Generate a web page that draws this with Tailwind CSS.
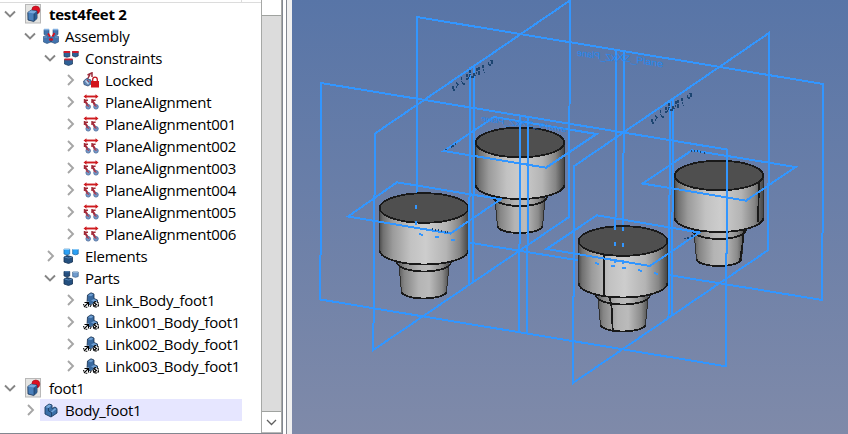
<!DOCTYPE html>
<html lang="en">
<head>
<meta charset="utf-8">
<title>Assembly</title>
<script src="https://cdn.jsdelivr.net/npm/@tailwindcss/browser@4"></script>
</head>
<body class="w-[848px] h-[434px] overflow-hidden bg-white">
<svg class="hidden">
  <symbol id="open" viewBox="0 0 12 12"><path d="M1 3.500 6 8.500 11 3.500" fill="none" stroke="#858585" stroke-width="1.900"/></symbol>
  <symbol id="closed" viewBox="0 0 12 12"><path d="M4 1 9 6 4 11" fill="none" stroke="#a6a6a6" stroke-width="1.900"/></symbol>
  <symbol id="doc" viewBox="0 0 16 20">
    <rect x=".5" y=".5" width="15" height="18.500" fill="#e4e4e2" stroke="#b8b8b8"/>
    <circle cx="10.800" cy="6" r="4" fill="#dc1022" stroke="#a30a18" stroke-width=".6"/>
    <path d="M2.800 8.500 6 6.200l6 .8v7.500L8.800 17.500 3 16z" fill="#4a80bb" stroke="#152f50" stroke-width=".8"/>
    <path d="M2.800 8.500 6 6.200l6 .8-3 2.500z" fill="#77a8dc"/><path d="M9 9.700 12 7v7.500L9 17z" fill="#2c5c91"/><path d="M9 9.700V17" stroke="#152f50" stroke-width=".6"/>
  </symbol>
  <symbol id="assembly" viewBox="0 0 16 16">
    <g fill="#4274ae" stroke="#234a78" stroke-width=".6"><path d="M1 1.500h5V6.500H1zM10 1.500h5V6.500h-5zM.5 8.500l3.500-1.500 4 2 4-2 3.500 1.500V14l-3.500 1.500L8 14l-4 1.500L.5 14z"/></g>
    <path d="M1 1.500h5M10 1.500h5" stroke="#82afe0" stroke-width="1.500"/><path d="M8 10v4" stroke="#17365c"/><path d="M1 9h3M12 9h3" stroke="#719dce"/>
    <path d="M5 5.500 7 8.500M11.500 5 9.500 8.500M6 11.500h4" stroke="#d80f1d" stroke-width="1.800"/>
  </symbol>
  <symbol id="constraints" viewBox="0 0 16 16">
    <g fill="#2f6096" stroke="#173456" stroke-width=".7"><path d="M1 1.500h5.800V6.500l-2.800.7L1 6.500zM9.500 1.500h5.700V6l-2.800 1L9.500 6zM1.500 9.500h8V14l-4 1.500-4-1.500z"/></g>
    <path d="M.7 2h6.300M9.300 2h6.200M1.500 9.300h8" stroke="#ce1c2e" stroke-width="1.800"/>
  </symbol>
  <symbol id="elements" viewBox="0 0 16 16">
    <path d="M1 9 4 7.500 9.500 9v5l-4 1.500L1 14z" fill="#24507f" stroke="#122e50" stroke-width=".8"/>
    <path d="M1.500 9 5.500 10 9.500 9" stroke="#5f90c4" fill="none" stroke-width=".8"/>
    <path d="M1 1.200h5.700V6l-2.700.8L1 6zM9.700 1.500h5.500V6l-2.700.8L9.700 6z" fill="#2aa0f5" stroke="#216ca8" stroke-width=".8"/>
    <path d="M1 1.500h5.500M10 1.500h5" stroke="#84c9fa"/>
  </symbol>
  <symbol id="parts" viewBox="0 0 16 16">
    <path d="M1 9 4 7.500 9.500 9v5l-4 1.500L1 14z" fill="#24507f" stroke="#122e50" stroke-width=".8"/>
    <path d="M1.500 9 5.500 10 9.500 9" stroke="#5f90c4" fill="none" stroke-width=".8"/>
    <path d="M1 1.500h5.700V6l-2.700.8L1 6z" fill="#254f80" stroke="#14304f" stroke-width=".8"/>
    <path d="M9.700 2h5.500V6.500l-2.700.8L9.700 6.500z" fill="#6f9bcd" stroke="#3f648d" stroke-width=".8"/>
    <path d="M1.500 1.700h5" stroke="#5485b9"/><path d="M10 2.200h5" stroke="#a9c8e8"/>
  </symbol>
  <symbol id="locked" viewBox="0 0 16 16">
    <path d="M4 8 7 2.500M4.500 3 9 .8 9 5" fill="none" stroke="#9d2c3b" stroke-width="1.500"/>
    <path d="M.6 9 3.500 6.500 8 8v4l-3 2L1 12.500z" fill="#5f87b8" stroke="#354e74" stroke-width=".8"/>
    <path d="M2.500 8.500 5.500 12" stroke="#c7d6e8" stroke-width="1.200"/><path d="M4 8 6 10" stroke="#a83a49"/>
    <path d="M9.700 9.500V7.500a2.300 2.300 0 0 1 4.600 0V9.500" fill="none" stroke="#c2141d" stroke-width="1.300"/>
    <path d="M8 9h8v6.500H8z" fill="#d3151d"/>
  </symbol>
  <symbol id="plane" viewBox="0 0 16 16">
    <path d="M2 2.500h12" stroke="#cf1c20" stroke-width="1.900"/><path d="M.5 2.500 3.500.2v4.600zM15.500 2.500 12.500.2v4.600z" fill="#cf1c20"/>
    <path d="M1.500 5v4M1.200 6.200h3.800M9 5v4M8.800 6.200h3.800" stroke="#a02a35" stroke-width="1.400"/>
    <path d="M2 7 5 11.500M9.500 7 12.500 11.500" stroke="#a62b3b" stroke-width="2.200"/>
    <g fill="#7398c8" stroke="#496a9a" stroke-width=".8"><circle cx="5.200" cy="12.800" r="2.300"/><circle cx="13" cy="12.800" r="2.300"/></g>
    <path d="m3 10.500 3 2M10.500 10.500l3 2" stroke="#b03b4d" stroke-width="1.300"/>
  </symbol>
  <symbol id="link" viewBox="0 0 16 16">
    <path d="M4.500 3 8 .8 11 2v4.500l3.500 1.500v4L10 14.500 4 11z" fill="#39699f" stroke="#162f4d" stroke-width=".8"/>
    <path d="M5 3.300 8 1.500 10.500 2.500 8 4.200zM8 8.500l3-1.500 3 1.200-3 1.800z" fill="#6f9fd2"/>
    <path d="M.3 9.700H6V15.500H.3z" fill="#fff"/><path d="M1.500 10.500h4v4M5.300 10.700 1 15M.7 12v1.500M2.500 15.300h1.800" fill="none" stroke="#000" stroke-width="1.100"/>
    <path d="m7 14 2-2.500 2 2.500-2 1.500z" fill="#fff"/><path d="M7 15l1.500-2.500" stroke="#000"/>
    <circle cx="13" cy="12.300" r="2.700" fill="#fff" stroke="#000" stroke-width="1.200" stroke-dasharray="2.500 .8"/><path d="M10.500 10.500 13.500 12.500 10.500 14.500" fill="none" stroke="#000" stroke-width="1.200"/>
  </symbol>
  <symbol id="body" viewBox="0 0 16 16">
    <path d="M2 5 6 2l3 1v3.500L12 5l2 1.500V11l-6 4-6-3z" fill="#3b70a9" stroke="#1b3b61" stroke-width=".9"/>
    <path d="M2.500 5.200 6 2.600 8.500 3.500 5.500 6zM8 9.700l3.700-3.500L13.500 7 9 10.500z" fill="#78a9dc"/><path d="M5.500 6v3L8.500 10.500V14.500" fill="none" stroke="#1b3b61" stroke-width=".8"/>
  </symbol>
</svg>

<div class="flex h-full w-full">
  <aside class="flex h-[434px] w-[283px] shrink-0 border-r border-b border-[#828790] bg-white">
    <div class="w-[261px] shrink-0">
      <div class="flex h-[3px] w-[261px] border-b border-[#dcdcdc]"><div class="w-[242px] border-r border-[#dcdcdc]"></div></div>
      <div id="tree" class="text-[15px] text-black whitespace-pre" style="font-family:'Open Sans','Noto Sans',sans-serif"></div>
    </div>
    <div class="flex w-[21px] shrink-0 flex-col border-x border-[#a6a8a6] bg-white">
      <div class="h-[15px]"></div>
      <div class="h-[397px] border-y border-[#a0a3a0] bg-[#dcdcdc]"></div>
      <div class="flex h-[21px] items-center justify-center border-b border-[#b8b8b8]">
        <svg class="h-[11px] w-[11px]" viewBox="0 0 11 11"><path d="M1 3 5.500 7.500 10 3" fill="none" stroke="#606060" stroke-width="1.300"/></svg>
      </div>
    </div>
  </aside>
  <div class="w-[3px] shrink-0 bg-white"></div>
  <div class="w-[6px] shrink-0 border-l border-[#828790] bg-[#f0f0f0]"></div>
  <main class="h-[434px] w-[556px] bg-linear-to-b from-[#5875a7] to-[#7f8aa9]">
    <svg class="block h-[434px] w-[556px]" viewBox="292 0 556 434" shape-rendering="crispEdges">
      <defs>
        <linearGradient id="side"><stop offset="0" stop-color="#4b4b4b"/><stop offset=".04" stop-color="#707070"/><stop offset=".15" stop-color="#9b9b9b"/><stop offset=".35" stop-color="#c2c2c2"/><stop offset=".52" stop-color="#cdcdcd"/><stop offset=".75" stop-color="#b4b4b4"/><stop offset=".9" stop-color="#858585"/><stop offset="1" stop-color="#444"/></linearGradient>
        <linearGradient id="neck"><stop offset="0" stop-color="#555"/><stop offset=".12" stop-color="#858585"/><stop offset=".4" stop-color="#b4b4b4"/><stop offset=".6" stop-color="#bbb"/><stop offset=".85" stop-color="#8b8b8b"/><stop offset="1" stop-color="#454545"/></linearGradient>
        <g id="foot" stroke="#191919" stroke-width="1.800">
          <path d="M-26 52 -25 57 -22.500 84A22.500 7.500 0 0 0 22.500 84L25 57 26 52z" fill="url(#neck)" stroke="none"/>
          <path d="M-25 57-22.500 84M25 57 22.500 84" stroke-width="1" stroke="#303030"/>
          <path d="M-22.500 83.500A22.500 7 0 0 0 22.500 83.500M-27 54A27 9.500 0 0 0 27 54" fill="none"/>
          <path d="M-44.500 0V43A44.500 13.500 0 0 0 44.500 43V0z" fill="url(#side)" stroke="none"/>
          <path d="M-44.500 0V43M44.500 0V43" stroke-width="1" stroke="#303030"/>
          <path d="M-44.500 42A44.500 14.500 0 0 0 44.500 42" fill="none"/>
          <ellipse rx="44.300" ry="14.800" fill="#4f4f4f"/>
        </g>
      </defs>
      <!-- rear datum plane and its axes -->
      <g fill="none" stroke="#3296ff" stroke-width="2">
        <path d="M416.500 234 417 17 823 84 822.300 300 416.500 234"/>
        <path d="M616.300 50 615.300 262M624 51 623 262"/>
      </g>
      <use href="#foot" x="520" y="142.500"/>
      <use href="#foot" x="424" y="208"/>
      <use href="#foot" x="719" y="175.500"/>
      <use href="#foot" x="623" y="241"/>
      <g fill="none" stroke="#191919" stroke-width="1.800">
        <path d="M604 254V295M609.500 296.500 611.500 306 612.700 330M759 182 758 222M744 229 742.500 244 740 261"/>
      </g>
      <g fill="none" stroke="#3296ff" stroke-width="2">
        <path d="M416 205v4M416 221v4M615.300 226v4M623 227v4M615.300 242v4M623 243v4M615.300 259v4M623 260v4M419 234l4 1M435 237h4M451 240h4M595 263l4 1M611 266h4M622 268h4M638 270l4 1M654 273l4 1"/>
      </g>
      <g fill="none" stroke="#3296ff" stroke-width="2">
        <path d="M321 83 727 149.500 726 366.300 320.400 299.500z"/>
        <path d="M375 133.500 570 .5 569 217 373.300 350z"/>
        <path d="M574.300 166 769 33 768.300 250 573 383z"/>
        <path d="M470.300 67 469 284M474.300 65 473 281M520.300 115 519 331M528.300 117 527 333M670.300 101 668.500 317M673.300 99 671.800 316"/>
        <path d="M397 182.300 500.700 199.300 450.500 233.500 348 216.500z"/>
        <path d="M494 117 596.500 134 546 167.700 443.700 151z"/>
        <path d="M597 215.300 699.500 232.500 650 266 546.500 249z"/>
        <path d="M692 150.300 795.500 167 746 200.700 642.500 183.500z"/>
      </g>
      <!-- plane captions -->
      <g font-family="Liberation Sans" font-size="9.500" fill="#2488f0">
        <text transform="matrix(-1 -.16 0 1 617 62)" textLength="40" lengthAdjust="spacingAndGlyphs">XZ_Plane</text>
        <text transform="matrix(1 .16 0 1 617 60)" textLength="46" lengthAdjust="spacingAndGlyphs">XZ_Plane</text>
        <text transform="matrix(-1 -.16 0 .8 521 127)" textLength="40">XZ_Plane</text>
        <text transform="matrix(1 .16 0 .8 520 125)" textLength="46">XZ_Plane</text>
      </g>
      <g fill="none" stroke="#1c4571" stroke-width="1.300">
        <g id="caption"><path stroke-dasharray="3 .7" d="M453 85.500v3M453 90h2M456 82.500l2 2-2 3M461.500 77v4l1.500 3h2M467 74v6M470 70v5l-2 4M471 77h3v-4M477 68v4l-2 4M479 67v8M483 65v4l2 4M488.500 62v4M490 60.500h2v3M491 65h-2"/></g>
        <use href="#caption" x="199" y="33"/>
        <path d="M432 229h1m2 1h1m2 0h1m2 1h1m3 1h1m1 0h1M445 150l2-1M451 147h1m1 0v-2m2-1h1M684 239l2-1m2 1v-2m3-1h2M691 151h1m2 0h1m2 0h1m2 1h1m3 1h1"/>
      </g>
    </svg>
  </main>
</div>
<script>
const indents = [
  {row:'flex h-[22px] items-center pl-1', gap:'ml-[9px]', text:'ml-[8px]'},
  {row:'flex h-[22px] items-center pl-[24px]', gap:'ml-[7px]', text:'ml-[6px]'},
  {row:'flex h-[22px] items-center pl-[44px]', gap:'ml-[7px]', text:'ml-[6px]'},
  {row:'flex h-[22px] items-center pl-[64px]', gap:'ml-[7px]', text:'ml-[6px]'}
];
const rows = [
  [0,'open','doc','test4feet 2'],[1,'open','assembly','Assembly'],[2,'open','constraints','Constraints'],[3,'closed','locked','Locked'],
  [3,'closed','plane','PlaneAlignment'],
  ...[1,2,3,4,5,6].map(n => [3,'closed','plane','PlaneAlignment00'+n]),
  [2,'closed','elements','Elements'],[2,'open','parts','Parts'],
  [3,'closed','link','Link_Body_foot1'],
  ...[1,2,3].map(n => [3,'closed','link','Link00'+n+'_Body_foot1']),
  [0,'open','doc','foot1'],[1,'closed','body','Body_foot1']
];
document.getElementById('tree').innerHTML = rows.map(([lvl, arrow, icon, label]) => {
  const d = indents[lvl];
  const weight = label === 'test4feet 2' ? 'font-bold tracking-[-0.25px]' : 'font-normal tracking-[-0.27px]';
  const size = icon === 'doc' ? 'h-5 w-4 shrink-0' : 'h-4 w-4 shrink-0';
  const inner = `<svg class="${size}"><use href="#${icon}"/></svg><span class="${d.text} ${weight} leading-[22px]">${label}</span>`;
  const body = icon === 'body'
    ? `<div class="ml-[4px] flex h-[22px] w-[202px] items-center bg-[#e6e6ff] pl-[3px]">${inner}</div>`
    : `<div class="${d.gap} flex items-center">${inner}</div>`;
  return `<div class="${d.row}"><svg class="h-3 w-3 shrink-0"><use href="#${arrow}"/></svg>${body}</div>`;
}).join('');
</script>
</body>
</html>
